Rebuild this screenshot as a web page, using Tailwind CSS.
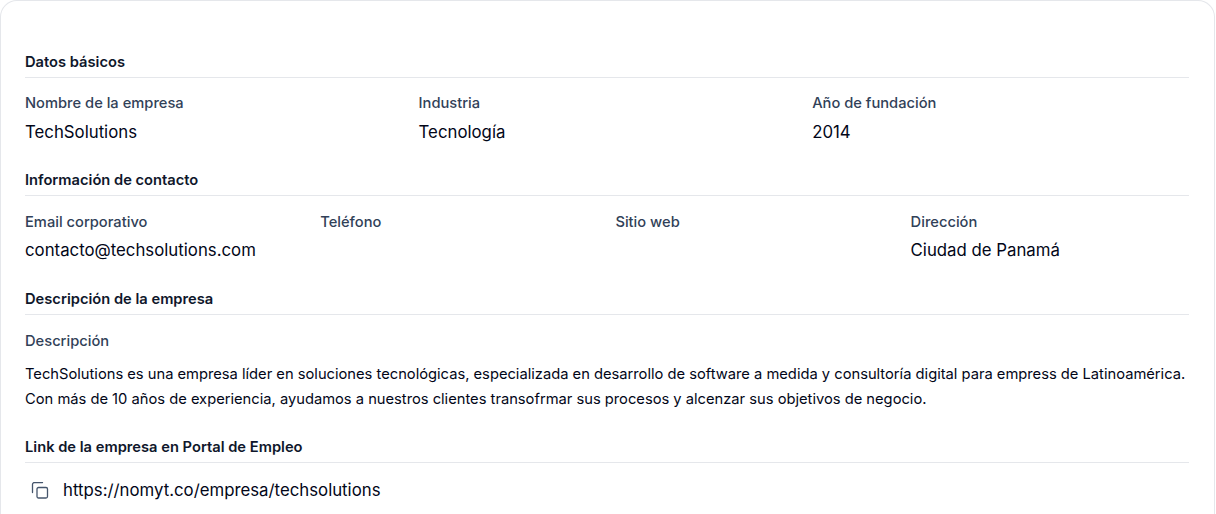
<!DOCTYPE html>
<html><head><meta charset="utf-8"><script src="https://cdn.jsdelivr.net/npm/@tailwindcss/browser@4"></script></head>
<body class="bg-white font-['Inter',sans-serif] h-[514px] overflow-hidden">
<div class="w-[1215px] h-[514px] overflow-hidden border border-b-0 border-gray-200 rounded-t-[17px] pl-6 pr-[25px] pt-[51px]">
<section>
<h3 class="text-[14.7px] leading-[21px] font-semibold text-slate-900 pb-[4px] border-b border-gray-200">Datos básicos</h3>
<div class="grid grid-cols-3 gap-x-[16.8px] pt-[15px]">
<div><p class="text-[14.7px] leading-[21px] font-medium text-slate-700">Nombre de la empresa</p><p class="mt-[6px] text-[16.8px] leading-[25px] text-slate-950">TechSolutions</p></div>
<div><p class="text-[14.7px] leading-[21px] font-medium text-slate-700">Industria</p><p class="mt-[6px] text-[16.8px] leading-[25px] text-slate-950">Tecnología</p></div>
<div><p class="text-[14.7px] leading-[21px] font-medium text-slate-700">Año de fundación</p><p class="mt-[6px] text-[16.8px] leading-[25px] text-slate-950">2014</p></div>
</div>
</section>
<section class="mt-[25px]">
<h3 class="text-[14.7px] leading-[21px] font-semibold text-slate-900 pb-[4px] border-b border-gray-200">Información de contacto</h3>
<div class="grid grid-cols-4 gap-x-[16.8px] pt-[16px]">
<div><p class="text-[14.7px] leading-[21px] font-medium text-slate-700">Email corporativo</p><p class="mt-[5px] mb-[1px] text-[16.8px] leading-[25px] text-slate-950">contacto@techsolutions.com</p></div>
<div><p class="text-[14.7px] leading-[21px] font-medium text-slate-700">Teléfono</p></div>
<div><p class="text-[14.7px] leading-[21px] font-medium text-slate-700">Sitio web</p></div>
<div><p class="text-[14.7px] leading-[21px] font-medium text-slate-700">Dirección</p><p class="mt-[5px] mb-[1px] text-[16.8px] leading-[25px] text-slate-950">Ciudad de Panamá</p></div>
</div>
</section>
<section class="mt-[25px]">
<h3 class="text-[14.7px] leading-[21px] font-semibold text-slate-900 pb-[4px] border-b border-gray-200">Descripción de la empresa</h3>
<div class="pt-[16px]">
<p class="text-[14.7px] leading-[21px] font-medium text-slate-700">Descripción</p>
<p class="mt-[10px] text-[14.71px] leading-[25px] text-slate-950">TechSolutions es una empresa líder en soluciones tecnológicas, especializada en desarrollo de software a medida y consultoría digital para empress de Latinoamérica. Con más de 10 años de experiencia, ayudamos a nuestros clientes transofrmar sus procesos y alcenzar sus objetivos de negocio.</p>
</div>
</section>
<section class="mt-[25px]">
<h3 class="text-[14.7px] leading-[21px] font-semibold text-slate-900 pb-[4px] border-b border-gray-200">Link de la empresa en Portal de Empleo</h3>
<div class="flex items-center gap-[14px] pt-[15px] pl-[6px]">
<svg class="w-[18px] h-[18px] text-slate-600" viewBox="0 0 18 18" fill="none" stroke="currentColor" stroke-width="1.3" stroke-linecap="round" stroke-linejoin="round"><rect x="6" y="5.500" width="10.500" height="10.500" rx="1.500"/><path d="M1.500 10.500V2.500a2 2 0 0 1 2-2H11.500"/></svg>
<span class="text-[16.8px] leading-[25px] text-slate-950">https://nomyt.co/empresa/techsolutions</span>
</div>
</section>
</div>
</body></html>
